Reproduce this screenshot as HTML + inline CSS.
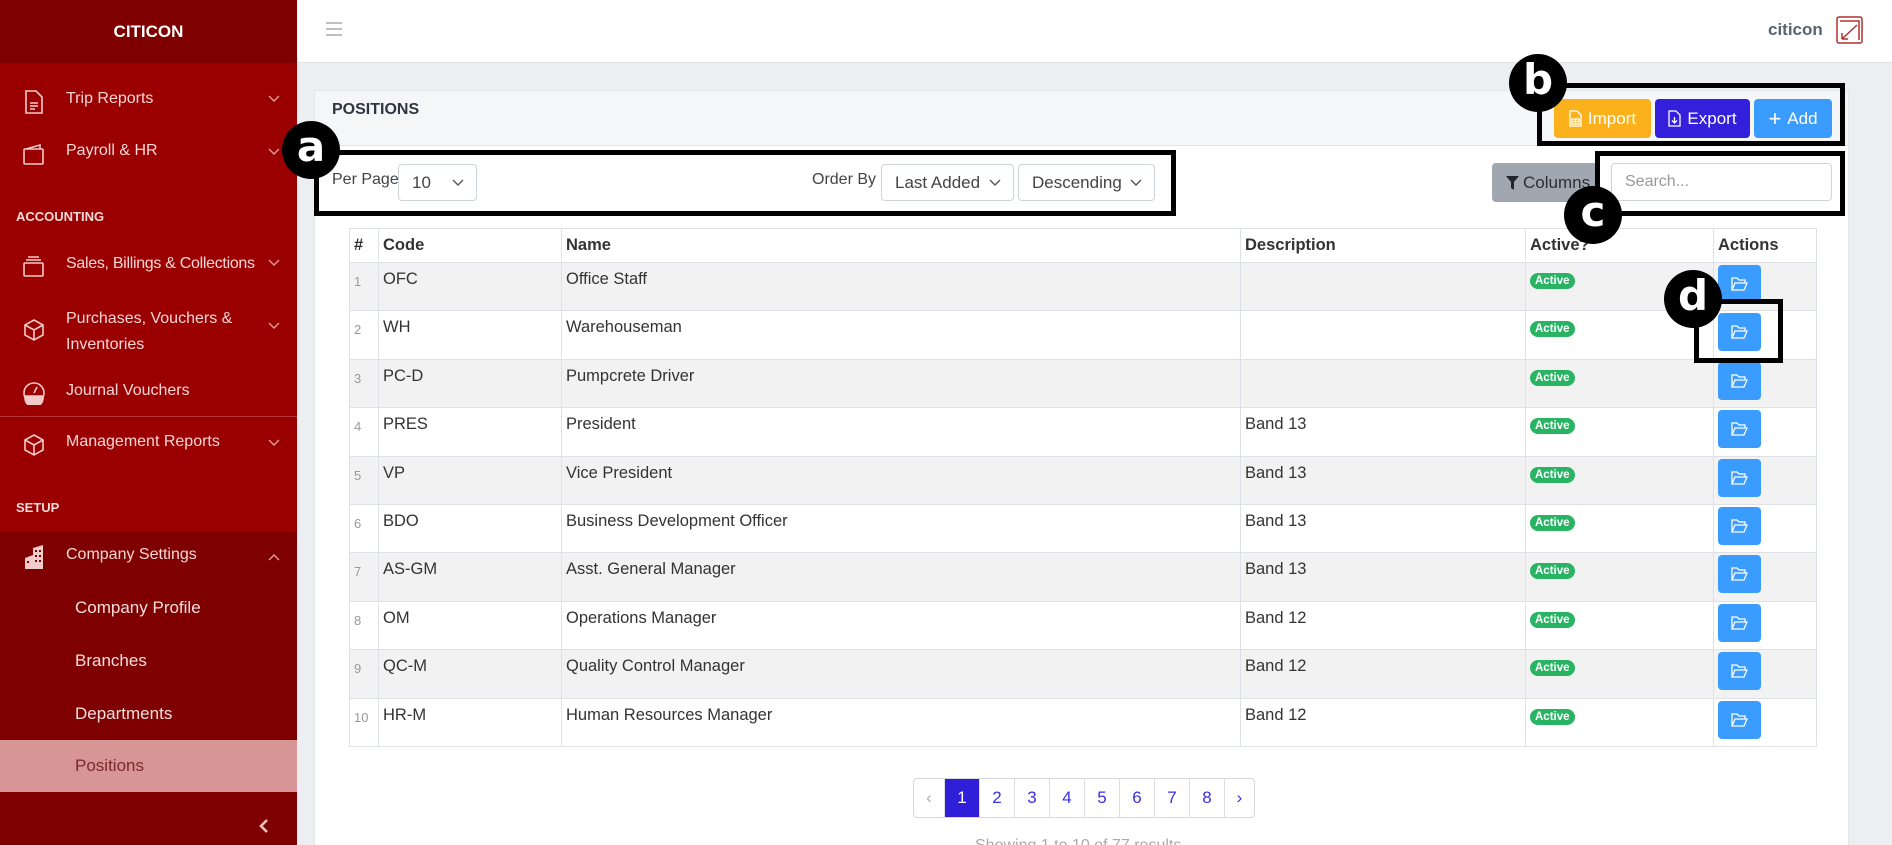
<!DOCTYPE html>
<html style="width:1892px;height:845px;overflow:hidden"><head><meta charset="utf-8">
<style>
*{box-sizing:border-box;margin:0;padding:0}
body{width:1892px;height:845px;overflow:hidden;position:relative;background:#eceef1;font-family:"Liberation Sans",sans-serif;color:#333}
.abs{position:absolute}
#sb{left:0;top:0;width:297px;height:845px;background:#9b0000}
#sbh{left:0;top:0;width:297px;height:63px;background:#7f0000;color:#fff;font-weight:bold;font-size:17px;text-align:center;line-height:63px}
#sbsub{left:0;top:532px;width:297px;height:313px;background:#7f0000}
#sbact{left:0;top:740px;width:297px;height:52px;background:#d79595}
.si{position:absolute;left:66px;color:#f4d6d6;font-size:16px;white-space:nowrap}
.sh{position:absolute;left:16px;color:#f2dada;font-size:13px;font-weight:bold}
.sub{position:absolute;left:75px;color:#f4dede;font-size:17px}
.ic{position:absolute;left:22px}
.chev{position:absolute;left:268px}
#top{left:297px;top:0;width:1595px;height:63px;background:#fff;border-bottom:1px solid #e1e3e6}
#card{left:314px;top:90px;width:1535px;height:760px;background:#fff;border:1px solid #e3e5e8;border-radius:3px}
#ch{left:315px;top:91px;width:1533px;height:55px;background:#f5f6f7;border-bottom:1px solid #e3e5e8}
.btn{position:absolute;top:99px;height:39px;border-radius:4px;color:#fff;font-size:17px;line-height:39px;text-align:center}
.sel{position:absolute;top:164px;height:37px;border:1px solid #ced4da;border-radius:4px;background:#fff;font-size:17px;line-height:35px;padding-left:13px;color:#444}
.sel svg{position:absolute;right:12px;top:14px}
table{position:absolute;left:349px;top:228px;border-collapse:collapse;font-size:16.5px;color:#333}
td,th{border:1px solid #dee2e6;text-align:left;vertical-align:top;padding:7px 4px 0 4px;height:48.4px}
th{height:34px;padding-top:7px;font-weight:bold;color:#333}
tr:nth-child(even) td{background:#f2f2f2}
td.n{color:#999;font-size:13px;padding-top:11px}
.bd{display:inline-block;background:#28b463;color:#fff;font-size:11.5px;font-weight:bold;border-radius:9px;padding:2px 5px;margin-top:-1px}
.ab{display:block;width:43px;height:38px;background:#3b9cff;border-radius:4px;margin:-5px 0 0 0;position:relative}
.ab svg{position:absolute;left:13px;top:12px}
.box{position:absolute;border:5px solid #000}
.circ{position:absolute;width:58px;height:58px;border-radius:50%;background:#000;color:#fff;font-weight:bold;font-size:42px;text-align:center;line-height:52px;font-family:"DejaVu Sans",sans-serif}
#pg{left:913px;top:778px;height:40px;display:flex;border:1px solid #d6d8dc;border-radius:4px;overflow:hidden;background:#fff}
#pg div{width:35px;height:38px;line-height:38px;text-align:center;color:#3b2fe0;font-size:17px;border-left:1px solid #dcdfe3}
#pg div:first-child{border-left:none;width:30px;color:#aaa}
#pg div.a{background:#2f1fd8;color:#fff}
</style></head><body>
<div id="sb" class="abs"></div>
<div id="sbsub" class="abs"></div>
<div id="sbact" class="abs"></div>
<div id="sbh" class="abs">CITICON</div>
<div class="abs" style="left:0;top:416px;width:297px;height:1px;background:#b33a3a"></div>

<svg class="ic" style="top:89px" width="24" height="26" viewBox="0 0 24 26" fill="none" stroke="#f1caca" stroke-width="1.6"><path d="M4 2h10l6 6v16H4z"/><path d="M8 14h8M8 17h8M8 20h5"/></svg>
<div class="si" style="top:90px">Trip Reports</div>
<svg class="ic" style="top:142px" width="24" height="24" viewBox="0 0 24 24" fill="none" stroke="#f1caca" stroke-width="1.6"><rect x="2" y="7" width="19" height="15" rx="1"/><path d="M4 7l14-4v4"/></svg>
<div class="si" style="top:142px">Payroll &amp; HR</div>
<div class="sh" style="top:209px">ACCOUNTING</div>
<svg class="ic" style="top:254px" width="24" height="24" viewBox="0 0 24 24" fill="none" stroke="#f1caca" stroke-width="1.6"><rect x="2" y="9" width="19" height="13" rx="1"/><path d="M4 6h15M6 3h11"/></svg>
<div class="si" style="top:255px;letter-spacing:-0.3px">Sales, Billings &amp; Collections</div>
<svg class="ic" style="top:318px" width="24" height="24" viewBox="0 0 24 24" fill="none" stroke="#f1caca" stroke-width="1.6"><path d="M12 2l9 5v10l-9 5-9-5V7z M3 7l9 5 9-5 M12 12v10"/></svg>
<div class="si" style="top:306px;line-height:26px">Purchases, Vouchers &amp;<br>Inventories</div>
<svg class="ic" style="top:381px" width="24" height="24" viewBox="0 0 24 24" fill="none" stroke="#f1caca" stroke-width="1.6"><circle cx="12" cy="12" r="10"/><path d="M3 15h18v2a9 9 0 0 1-18 0z" fill="#f1caca"/><path d="M12 12l3-6"/></svg>
<div class="si" style="top:382px">Journal Vouchers</div>
<svg class="ic" style="top:433px" width="24" height="24" viewBox="0 0 24 24" fill="none" stroke="#f1caca" stroke-width="1.6"><path d="M12 2l9 5v10l-9 5-9-5V7z M3 7l9 5 9-5 M12 12v10"/></svg>
<div class="si" style="top:433px">Management Reports</div>
<div class="sh" style="top:500px">SETUP</div>
<svg class="ic" style="top:544px" width="24" height="26" viewBox="0 0 24 26" fill="#f1caca"><path d="M11 4l10-3v24H11z M3 14l8-3v14H3z"/><path d="M13 6h2v2h-2zM17 6h2v2h-2zM13 11h2v2h-2zM17 11h2v2h-2zM13 16h2v2h-2zM17 16h2v2h-2zM5 17h2v2H5z" fill="#7f0000"/></svg>
<div class="si" style="top:546px">Company Settings</div>
<div class="sub" style="top:598px">Company Profile</div>
<div class="sub" style="top:651px">Branches</div>
<div class="sub" style="top:704px">Departments</div>
<div class="sub" style="top:756px;color:#7a2a2a">Positions</div>

<svg class="chev" style="top:95px" width="12" height="8" viewBox="0 0 12 8" fill="none" stroke="#e0a0a0" stroke-width="1.4"><path d="M1 1l5 5 5-5"/></svg>
<svg class="chev" style="top:148px" width="12" height="8" viewBox="0 0 12 8" fill="none" stroke="#e0a0a0" stroke-width="1.4"><path d="M1 1l5 5 5-5"/></svg>
<svg class="chev" style="top:259px" width="12" height="8" viewBox="0 0 12 8" fill="none" stroke="#e0a0a0" stroke-width="1.4"><path d="M1 1l5 5 5-5"/></svg>
<svg class="chev" style="top:322px" width="12" height="8" viewBox="0 0 12 8" fill="none" stroke="#e0a0a0" stroke-width="1.4"><path d="M1 1l5 5 5-5"/></svg>
<svg class="chev" style="top:439px" width="12" height="8" viewBox="0 0 12 8" fill="none" stroke="#e0a0a0" stroke-width="1.4"><path d="M1 1l5 5 5-5"/></svg>
<svg class="chev" style="top:553px" width="12" height="8" viewBox="0 0 12 8" fill="none" stroke="#e0a0a0" stroke-width="1.4"><path d="M1 7l5-5 5 5"/></svg>
<svg class="abs" style="left:259px;top:818px" width="10" height="16" viewBox="0 0 10 16" fill="none" stroke="#e8c0c0" stroke-width="2.6"><path d="M8 2L2 8l6 6"/></svg>

<div id="top" class="abs"></div>
<svg class="abs" style="left:326px;top:22px" width="16" height="14" viewBox="0 0 16 14" stroke="#999" stroke-width="1.3"><path d="M0 1h16M0 7h16M0 13h16"/></svg>
<div class="abs" style="left:1768px;top:20px;font-size:17px;font-weight:bold;color:#5a6470">citicon</div>
<svg class="abs" style="left:1836px;top:16px" width="27" height="28" viewBox="0 0 27 28" fill="none" stroke="#b33030" stroke-width="1.5"><rect x="1" y="1" width="25" height="26" rx="2"/><path d="M4 5h19v19"/><path d="M21 9L6 23M6 23h6M6 23v-6"/></svg>

<div id="card" class="abs"></div>
<div id="ch" class="abs"></div>
<div class="abs" style="left:332px;top:101px;font-size:16px;font-weight:bold;color:#2e3640">POSITIONS</div>

<div class="btn" style="left:1554px;width:97px;background:#fbb11b"><svg style="vertical-align:-3px;margin-right:6px" width="13" height="17" viewBox="0 0 13 17" fill="none" stroke="#fff" stroke-width="1.3"><path d="M1 1h7l4 4v11H1z"/><path d="M3 9h7v5H3zM3 11.5h7M6.5 9v5"/></svg>Import</div>
<div class="btn" style="left:1655px;width:95px;background:#3320dc"><svg style="vertical-align:-3px;margin-right:6px" width="13" height="17" viewBox="0 0 13 17" fill="none" stroke="#fff" stroke-width="1.3"><path d="M1 1h7l4 4v11H1z"/><path d="M6.5 7v6M4 10.5l2.5 2.5 2.5-2.5"/></svg>Export</div>
<div class="btn" style="left:1754px;width:78px;background:#3b9cff"><span style="font-size:22px;vertical-align:-2px;margin-right:6px">+</span>Add</div>

<div class="abs" style="left:332px;top:171px;font-size:16px;color:#444">Per Page</div>
<div class="sel" style="left:398px;width:79px">10<svg width="12" height="8" viewBox="0 0 12 8" fill="none" stroke="#555" stroke-width="1.4"><path d="M1 1l5 5 5-5"/></svg></div>
<div class="abs" style="left:812px;top:171px;font-size:16px;color:#444">Order By</div>
<div class="sel" style="left:881px;width:133px">Last Added<svg width="12" height="8" viewBox="0 0 12 8" fill="none" stroke="#555" stroke-width="1.4"><path d="M1 1l5 5 5-5"/></svg></div>
<div class="sel" style="left:1018px;width:137px">Descending<svg width="12" height="8" viewBox="0 0 12 8" fill="none" stroke="#555" stroke-width="1.4"><path d="M1 1l5 5 5-5"/></svg></div>

<div class="abs" style="left:1492px;top:163px;width:108px;height:39px;background:#a0a7b0;border-radius:4px;font-size:17px;line-height:39px;color:#283038;padding-left:14px"><svg style="vertical-align:-2px;margin-right:4px" width="13" height="14" viewBox="0 0 13 14" fill="#1f262d"><path d="M0 0h13L8 6v8L5 12V6z"/></svg>Columns</div>
<div class="abs" style="left:1611px;top:163px;width:221px;height:38px;border:1px solid #ced4da;border-radius:4px;background:#fff;font-size:16px;line-height:36px;padding-left:13px;color:#999">Search...</div>

<table>
<colgroup><col style="width:29px"><col style="width:183px"><col style="width:679px"><col style="width:285px"><col style="width:188px"><col style="width:103px"></colgroup>
<tr><th>#</th><th>Code</th><th>Name</th><th>Description</th><th>Active?</th><th>Actions</th></tr>
<tr><td class="n">1</td><td>OFC</td><td>Office Staff</td><td></td><td><span class="bd">Active</span></td><td><span class="ab"><svg width="17" height="14" viewBox="0 0 17 14" fill="none" stroke="#fff" stroke-width="1.3"><path d="M1 13V1h5l2 2h6v3M1 13l3-7h12l-3 7z"/></svg></span></td></tr>
<tr><td class="n">2</td><td>WH</td><td>Warehouseman</td><td></td><td><span class="bd">Active</span></td><td><span class="ab"><svg width="17" height="14" viewBox="0 0 17 14" fill="none" stroke="#fff" stroke-width="1.3"><path d="M1 13V1h5l2 2h6v3M1 13l3-7h12l-3 7z"/></svg></span></td></tr>
<tr><td class="n">3</td><td>PC-D</td><td>Pumpcrete Driver</td><td></td><td><span class="bd">Active</span></td><td><span class="ab"><svg width="17" height="14" viewBox="0 0 17 14" fill="none" stroke="#fff" stroke-width="1.3"><path d="M1 13V1h5l2 2h6v3M1 13l3-7h12l-3 7z"/></svg></span></td></tr>
<tr><td class="n">4</td><td>PRES</td><td>President</td><td>Band 13</td><td><span class="bd">Active</span></td><td><span class="ab"><svg width="17" height="14" viewBox="0 0 17 14" fill="none" stroke="#fff" stroke-width="1.3"><path d="M1 13V1h5l2 2h6v3M1 13l3-7h12l-3 7z"/></svg></span></td></tr>
<tr><td class="n">5</td><td>VP</td><td>Vice President</td><td>Band 13</td><td><span class="bd">Active</span></td><td><span class="ab"><svg width="17" height="14" viewBox="0 0 17 14" fill="none" stroke="#fff" stroke-width="1.3"><path d="M1 13V1h5l2 2h6v3M1 13l3-7h12l-3 7z"/></svg></span></td></tr>
<tr><td class="n">6</td><td>BDO</td><td>Business Development Officer</td><td>Band 13</td><td><span class="bd">Active</span></td><td><span class="ab"><svg width="17" height="14" viewBox="0 0 17 14" fill="none" stroke="#fff" stroke-width="1.3"><path d="M1 13V1h5l2 2h6v3M1 13l3-7h12l-3 7z"/></svg></span></td></tr>
<tr><td class="n">7</td><td>AS-GM</td><td>Asst. General Manager</td><td>Band 13</td><td><span class="bd">Active</span></td><td><span class="ab"><svg width="17" height="14" viewBox="0 0 17 14" fill="none" stroke="#fff" stroke-width="1.3"><path d="M1 13V1h5l2 2h6v3M1 13l3-7h12l-3 7z"/></svg></span></td></tr>
<tr><td class="n">8</td><td>OM</td><td>Operations Manager</td><td>Band 12</td><td><span class="bd">Active</span></td><td><span class="ab"><svg width="17" height="14" viewBox="0 0 17 14" fill="none" stroke="#fff" stroke-width="1.3"><path d="M1 13V1h5l2 2h6v3M1 13l3-7h12l-3 7z"/></svg></span></td></tr>
<tr><td class="n">9</td><td>QC-M</td><td>Quality Control Manager</td><td>Band 12</td><td><span class="bd">Active</span></td><td><span class="ab"><svg width="17" height="14" viewBox="0 0 17 14" fill="none" stroke="#fff" stroke-width="1.3"><path d="M1 13V1h5l2 2h6v3M1 13l3-7h12l-3 7z"/></svg></span></td></tr>
<tr><td class="n">10</td><td>HR-M</td><td>Human Resources Manager</td><td>Band 12</td><td><span class="bd">Active</span></td><td><span class="ab"><svg width="17" height="14" viewBox="0 0 17 14" fill="none" stroke="#fff" stroke-width="1.3"><path d="M1 13V1h5l2 2h6v3M1 13l3-7h12l-3 7z"/></svg></span></td></tr>
</table>

<div id="pg" class="abs"><div>‹</div><div class="a">1</div><div>2</div><div>3</div><div>4</div><div>5</div><div>6</div><div>7</div><div>8</div><div style="width:30px">›</div></div>
<div class="abs" style="left:975px;top:837px;font-size:16px;color:#aaa">Showing 1 to 10 of 77 results</div>

<div class="box" style="left:314px;top:150px;width:862px;height:66px"></div>
<div class="box" style="left:1537px;top:83px;width:308px;height:63px"></div>
<div class="box" style="left:1595px;top:151px;width:250px;height:65px"></div>
<div class="box" style="left:1694px;top:299px;width:89px;height:64px"></div>
<div class="circ" style="left:282px;top:121px">a</div>
<div class="circ" style="left:1509px;top:54px">b</div>
<div class="circ" style="left:1564px;top:186px">c</div>
<div class="circ" style="left:1664px;top:270px">d</div>
</body></html>
